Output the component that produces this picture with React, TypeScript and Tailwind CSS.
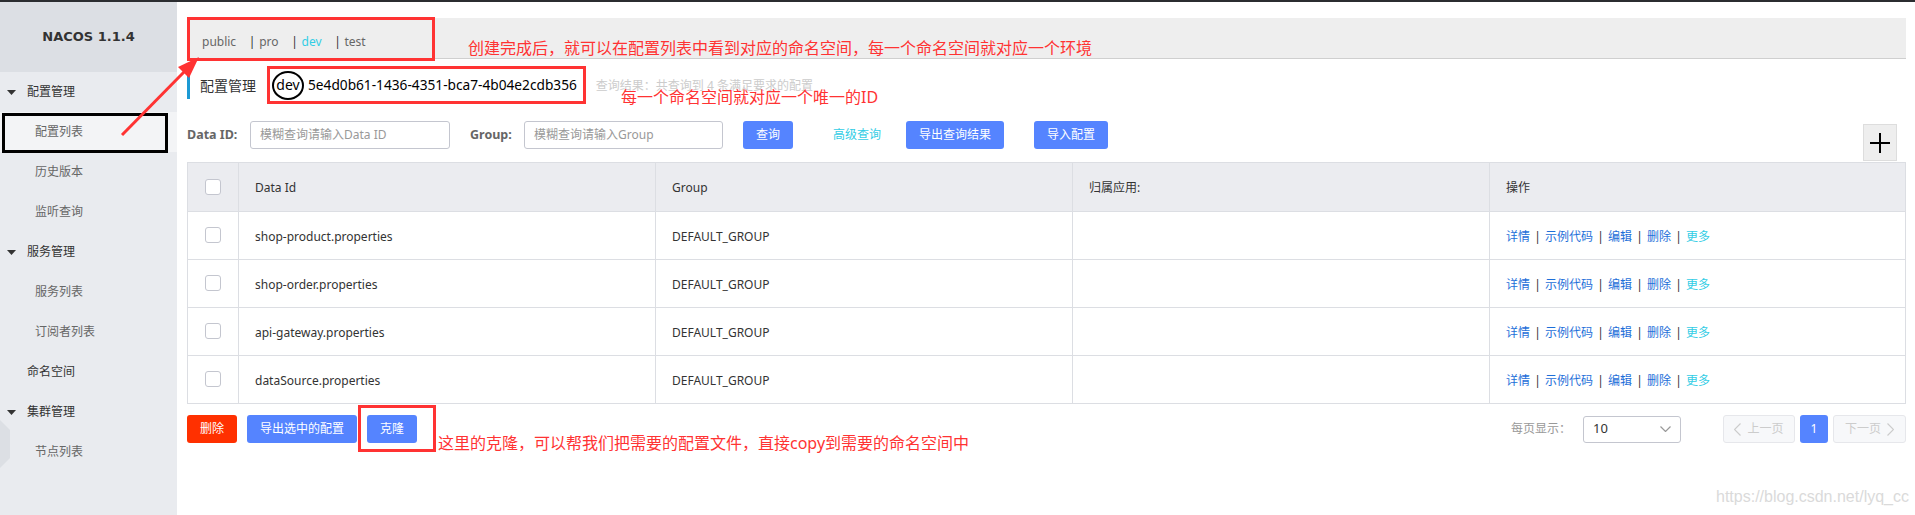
import React from "react";

const sideMenu = [
  { label: "配置管理", kind: "group" },
  { label: "配置列表", kind: "item", active: true },
  { label: "历史版本", kind: "item" },
  { label: "监听查询", kind: "item" },
  { label: "服务管理", kind: "group" },
  { label: "服务列表", kind: "item" },
  { label: "订阅者列表", kind: "item" },
  { label: "命名空间", kind: "plain" },
  { label: "集群管理", kind: "group" },
  { label: "节点列表", kind: "item" },
];

const rows = [
  "shop-product.properties",
  "shop-order.properties",
  "api-gateway.properties",
  "dataSource.properties",
];

const tabs = [
  { name: "public", active: false },
  { name: "pro", active: false },
  { name: "dev", active: true },
  { name: "test", active: false },
];

function Checkbox() {
  return <span className="inline-block w-[16px] h-[16px] rounded-[3px] border border-[#c4c6cf] bg-white" />;
}

function Sidebar() {
  return (
    <aside className="relative w-[177px] shrink-0 bg-[#e9ebef] flex flex-col">
      <div className="h-[70px] bg-[#dcdfe4] flex items-center justify-center">
        <span className="font-['DejaVu_Sans',sans-serif] font-bold text-[13px] text-[#333]">NACOS 1.1.4</span>
      </div>
      {sideMenu.map((m) => {
        if (m.kind === "group") {
          return (
            <div key={m.label} className="h-[40px] flex items-center pl-[7px] text-[12px] text-[#333]">
              <svg width="9" height="5" viewBox="0 0 9 5">
                <polygon points="0,0 9,0 4.5,5" fill="#333" />
              </svg>
              <span className="ml-[11px]">{m.label}</span>
            </div>
          );
        }
        if (m.kind === "plain") {
          return (
            <div key={m.label} className="h-[40px] flex items-center pl-[27px] text-[12px] text-[#333]">
              {m.label}
            </div>
          );
        }
        return (
          <div
            key={m.label}
            className={`relative h-[40px] flex items-center pl-[35px] text-[12px] text-[#666] ${m.active ? "bg-[#f3f4f6]" : ""}`}
          >
            {m.label}
            {m.active && (
              <span className="absolute left-[2px] top-[1px] w-[166px] h-[40px] border-[3px] border-black" />
            )}
          </div>
        );
      })}
      {/* collapse handle */}
      <svg className="absolute left-0 top-[418px]" width="10" height="48" viewBox="0 0 10 48">
        <polygon points="0,0 10,10 10,38 0,48" fill="#dcdfe4" />
      </svg>
    </aside>
  );
}

function OpLinks() {
  const sep = <span className="inline-block w-[15px] text-center text-[#333]">|</span>;
  return (
    <div className="flex items-center text-[12px] text-[#1e6fd9]">
      <span>详情</span>
      {sep}
      <span>示例代码</span>
      {sep}
      <span>编辑</span>
      {sep}
      <span>删除</span>
      {sep}
      <span className="text-[#33cde5]">更多</span>
    </div>
  );
}

export default function App() {
  return (
    <div className="relative w-[1915px] h-[515px] overflow-hidden bg-white flex flex-col font-['Noto_Sans','Noto_Sans_CJK_SC',sans-serif]">
      <div className="h-[2px] shrink-0 bg-[#2b2d30]" />
      <div className="flex flex-1">
        <Sidebar />

        <main className="relative flex-1 pl-[10px] pr-[9px] pt-[16px]">
          {/* namespace tabs */}
          <div className="h-[41px] bg-[#eeeeee] border-b border-[#cfcfcf] flex items-center pt-[7px] pl-[15px] text-[12px] text-[#666]">
            {tabs.map((t, i) => (
              <span key={t.name} className="flex items-center">
                {i > 0 && <span className="ml-[9px] inline-block w-[14px] text-center text-[#333]">|</span>}
                <span className={t.active ? "text-[#33cde5]" : ""}>{t.name}</span>
              </span>
            ))}
          </div>

          {/* title */}
          <div className="mt-[7px] h-[38px] flex items-center">
            <span className="w-[3px] h-[28px] bg-[#1d9ad4]" />
            <span className="ml-[10px] text-[14px] text-[#333]">配置管理</span>
            <span className="ml-[11px] h-[38px] border-[3px] border-[#ff3333] flex items-center pl-[2px] pr-[6px] text-[14px] text-black">
              <span className="w-[32px] h-[29px] rounded-[50%] border-2 border-black flex items-center justify-center leading-none">dev</span>
              <span className="ml-[4px] text-[13.7px]">5e4d0b61-1436-4351-bca7-4b04e2cdb356</span>
            </span>
            <span className="ml-[10px] mt-[2px] text-[12px] text-[#cccccc]">查询结果：共查询到 4 条满足要求的配置</span>
          </div>

          {/* filters */}
          <div className="mt-[17px] h-[41px] flex items-start text-[12px]">
            <span className="w-[50px] h-[28px] flex items-center whitespace-nowrap text-[12.5px] font-bold text-[#666]">Data ID:</span>
            <div className="ml-[13px] w-[200px] h-[28px] rounded-[3px] border border-[#c4c6cf] flex items-center pl-[9px] text-[#999]">
              模糊查询请输入Data ID
            </div>
            <span className="ml-[20px] w-[40px] h-[28px] flex items-center whitespace-nowrap text-[12.5px] font-bold text-[#666]">Group:</span>
            <div className="ml-[14px] w-[199px] h-[28px] rounded-[3px] border border-[#c4c6cf] flex items-center pl-[9px] text-[#999]">
              模糊查询请输入Group
            </div>
            <button className="ml-[20px] w-[50px] h-[28px] rounded-[3px] bg-[#5584ff] text-white">查询</button>
            <span className="ml-[40px] h-[28px] flex items-center text-[#33cde5]">高级查询</span>
            <button className="ml-[25px] w-[98px] h-[28px] rounded-[3px] bg-[#5584ff] text-white">导出查询结果</button>
            <button className="ml-[30px] w-[74px] h-[28px] rounded-[3px] bg-[#5584ff] text-white">导入配置</button>
            <div className="ml-auto mr-[9px] mt-[3px] w-[34px] h-[37px] bg-[#eeeeee] border border-[#dddddd] flex items-center justify-center">
              <svg width="20" height="20" viewBox="0 0 20 20">
                <path d="M10 0v20M0 10h20" stroke="#000" strokeWidth="2" />
              </svg>
            </div>
          </div>

          {/* table */}
          <table className="w-full border-collapse border border-[#dcdee3] text-[12px] text-[#333] table-fixed">
            <colgroup>
              <col className="w-[51px]" />
              <col className="w-[417px]" />
              <col className="w-[417px]" />
              <col className="w-[417px]" />
              <col />
            </colgroup>
            <thead>
              <tr className="h-[49px] bg-[#ebecf0]">
                <th className="border border-[#dcdee3] text-center align-middle">
                  <div className="flex justify-center"><Checkbox /></div>
                </th>
                <th className="border border-[#dcdee3] text-left font-normal pl-[16px] pt-[2px]">Data Id</th>
                <th className="border border-[#dcdee3] text-left font-normal pl-[16px] pt-[2px]">Group</th>
                <th className="border border-[#dcdee3] text-left font-normal pl-[16px] pt-[2px]">归属应用:</th>
                <th className="border border-[#dcdee3] text-left font-normal pl-[16px] pt-[2px]">操作</th>
              </tr>
            </thead>
            <tbody>
              {rows.map((r) => (
                <tr key={r} className="h-[48px]">
                  <td className="border border-[#dcdee3]">
                    <div className="flex justify-center -mt-[2px]"><Checkbox /></div>
                  </td>
                  <td className="border border-[#dcdee3] pl-[16px] pt-[2px]">{r}</td>
                  <td className="border border-[#dcdee3] pl-[16px] pt-[2px]">DEFAULT_GROUP</td>
                  <td className="border border-[#dcdee3] pl-[16px]" />
                  <td className="border border-[#dcdee3] pl-[16px] pt-[2px]"><OpLinks /></td>
                </tr>
              ))}
            </tbody>
          </table>

          {/* bottom bar */}
          <div className="mt-[11px] h-[28px] flex items-center text-[12px]">
            <button className="w-[50px] h-[28px] rounded-[3px] bg-[#ff3000] text-white">删除</button>
            <button className="ml-[10px] w-[110px] h-[28px] rounded-[3px] bg-[#5584ff] text-white">导出选中的配置</button>
            <div className="relative ml-[10px]">
              <button className="w-[50px] h-[28px] rounded-[3px] bg-[#5584ff] text-white">克隆</button>
              <span className="absolute left-[-9px] top-[-10px] w-[78px] h-[47px] border-[3px] border-[#ff3333]" />
              <span className="absolute left-[71px] top-[18px] whitespace-nowrap text-[16px] leading-[20px] text-[#ff3333]">
                这里的克隆，可以帮我们把需要的配置文件，直接copy到需要的命名空间中
              </span>
            </div>

            <div className="ml-auto flex items-center">
              <span className="text-[#999]">每页显示：</span>
              <div className="ml-[12px] w-[98px] h-[27px] rounded-[3px] border border-[#c4c6cf] flex items-center justify-between pl-[9px] pr-[9px]">
                <span className="text-[13px] text-[#333]">10</span>
                <svg width="11" height="6" viewBox="0 0 11 6">
                  <path d="M0.5 0.5l5 5 5-5" fill="none" stroke="#999" strokeWidth="1.2" />
                </svg>
              </div>
              <div className="ml-[42px] w-[72px] h-[28px] rounded-[3px] border border-[#e6e7eb] bg-[#f7f8fa] flex items-center justify-center gap-[6px] text-[#cccccc]">
                <svg width="7" height="13" viewBox="0 0 7 13">
                  <path d="M6.5 0.5l-6 6 6 6" fill="none" stroke="#cccccc" strokeWidth="1.2" />
                </svg>
                <span>上一页</span>
              </div>
              <div className="ml-[5px] w-[28px] h-[28px] rounded-[3px] bg-[#5584ff] flex items-center justify-center text-white">1</div>
              <div className="ml-[5px] w-[73px] h-[28px] rounded-[3px] border border-[#e6e7eb] bg-[#f7f8fa] flex items-center justify-center gap-[6px] text-[#cccccc]">
                <span>下一页</span>
                <svg width="7" height="13" viewBox="0 0 7 13">
                  <path d="M0.5 0.5l6 6-6 6" fill="none" stroke="#cccccc" strokeWidth="1.2" />
                </svg>
              </div>
            </div>
          </div>

          {/* annotations */}
          <span className="absolute left-[10px] top-[15px] w-[248px] h-[44px] border-[3px] border-[#ff3333]" />
          <span className="absolute left-[291px] top-[36px] whitespace-nowrap text-[16px] leading-[20px] text-[#ff3333]">
            创建完成后，就可以在配置列表中看到对应的命名空间，每一个命名空间就对应一个环境
          </span>
          <span className="absolute left-[444px] top-[85px] whitespace-nowrap text-[16px] leading-[20px] text-[#ff3333]">
            每一个命名空间就对应一个唯一的ID
          </span>
          <span className="absolute left-[1539px] top-[485px] whitespace-nowrap font-['Liberation_Sans',sans-serif] text-[16px] leading-[20px] text-[#dadada]">
            https://blog.csdn.net/lyq_cc
          </span>
        </main>
      </div>

      {/* arrow from sidebar item to namespace tabs */}
      <svg className="absolute left-0 top-0 pointer-events-none" width="1915" height="515" viewBox="0 0 1915 515">
        <line x1="122" y1="135" x2="184" y2="72" stroke="#ff3333" strokeWidth="3" />
        <polygon points="199,57 189,78 178,67" fill="#ff3333" />
      </svg>
    </div>
  );
}
